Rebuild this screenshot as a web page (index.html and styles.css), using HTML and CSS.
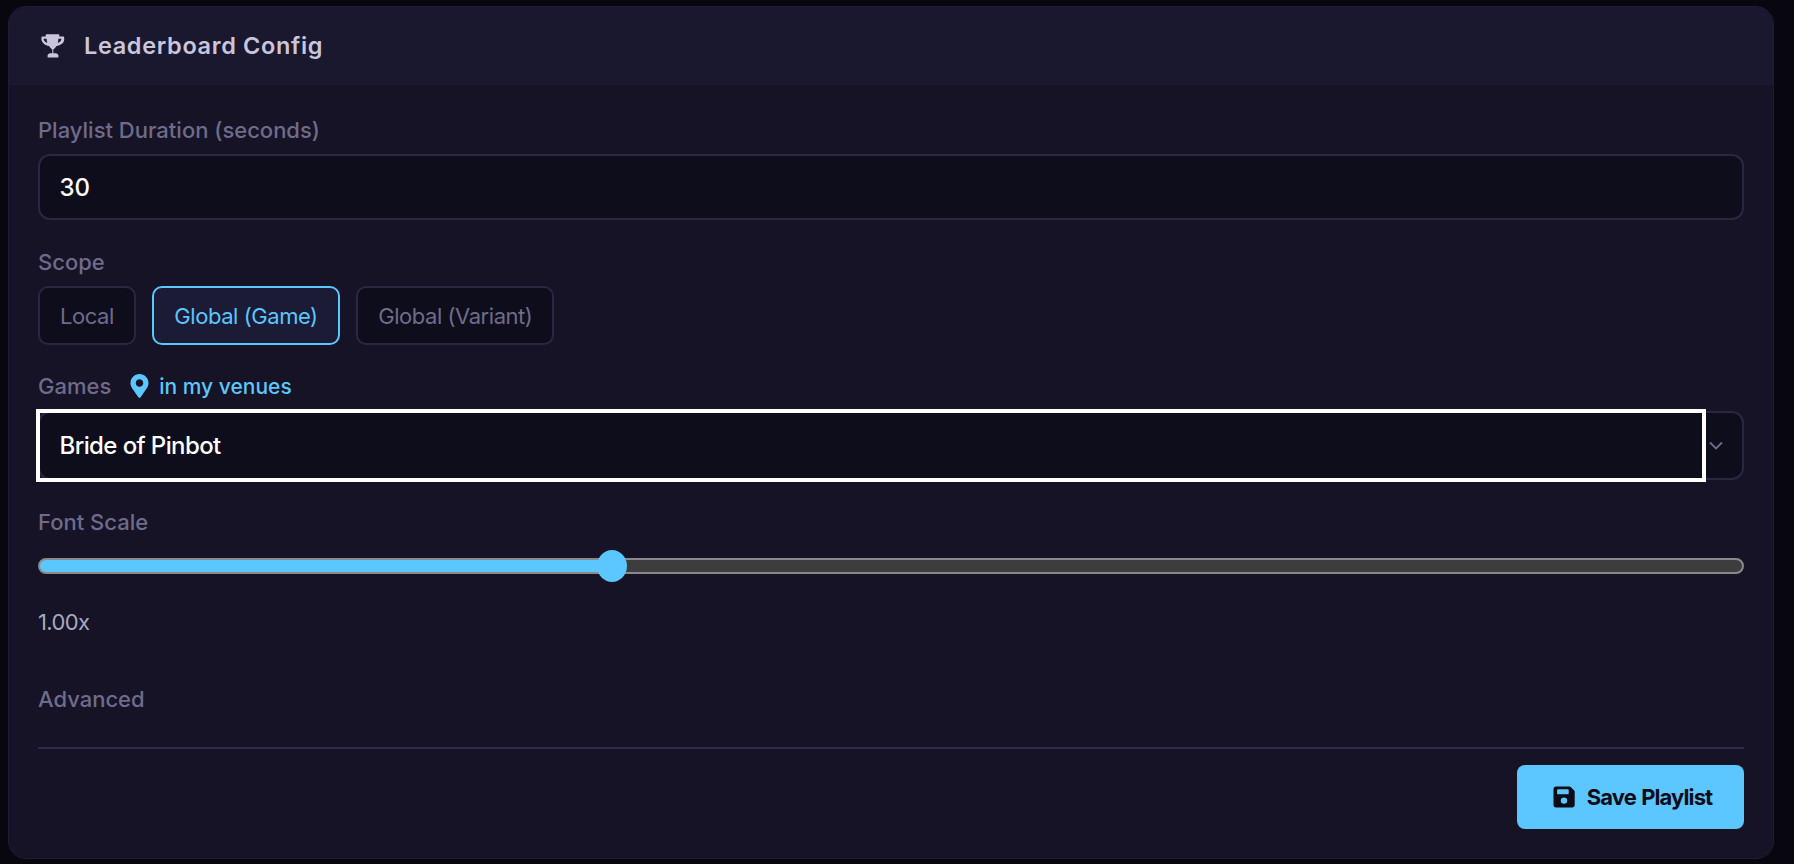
FILE: index.html
```html
<!DOCTYPE html>
<html lang="en">
<head>
<meta charset="utf-8">
<title>Leaderboard Config</title>
<link rel="stylesheet" href="styles.css">
</head>
<body>
<section class="card">
  <header class="card-head">
    <svg class="trophy" viewBox="0 0 24 24" aria-hidden="true"><path fill-rule="evenodd" d="M6.200 0.300h11.600c.6 0 1 .4 1 1v1.100h3.700c.7 0 1.200.5 1.200 1.200v1.800c0 1.700-1 3.400-2.700 4.700-1.400 1.100-3.100 1.800-4.900 2-1.300 2.100-2.500 3-3.300 3.500v3.600h2.400c1.500 0 2.700 1 2.700 2.400v1.400c0 .4-.2.6-.6.6H7.700c-.4 0-.6-.2-.6-.6v-1.400c0-1.400 1.200-2.400 2.700-2.400h2v-3.600c-.8-.5-2-1.400-3.300-3.500-1.800-.2-3.500-.9-4.900-2C1.900 8.500.9 6.800.9 5.100V3.600c0-.7.5-1.200 1.200-1.200h3.100V1.300c0-.6.4-1 1-1zM3.200 4.700v.6c0 .8.6 1.900 1.800 2.800.5.4 1.100.7 1.800 1-.4-1.300-.6-2.800-.7-4.400zm17.600 0h-2.900c-.1 1.600-.3 3.100-.7 4.400.7-.3 1.300-.6 1.800-1 1.100-.8 1.800-1.900 1.800-2.800z"/></svg>
    <h2 class="card-title">Leaderboard Config</h2>
  </header>
  <form class="card-body">
    <label class="label">Playlist Duration (seconds)</label>
    <div class="input">30</div>

    <label class="label label-scope">Scope</label>
    <div class="scope-row">
      <button type="button" class="scope">Local</button>
      <button type="button" class="scope scope-on">Global (Game)</button>
      <button type="button" class="scope">Global (Variant)</button>
    </div>

    <div class="games-row">
      <span class="label label-inline">Games</span>
      <span class="venues">
        <svg class="pin" viewBox="0 0 384 512" aria-hidden="true"><path d="M172.268 501.67C26.97 291.031 0 269.413 0 192 0 85.961 85.961 0 192 0s192 85.961 192 192c0 77.413-26.97 99.031-172.268 309.67-9.535 13.774-29.93 13.773-39.464 0zM192 272c44.183 0 80-35.817 80-80s-35.817-80-80-80-80 35.817-80 80 35.817 80 80 80z"/></svg>
        in my venues
      </span>
    </div>
    <div class="select">
      <div class="select-value">Bride of Pinbot</div>
      <svg class="chevron" viewBox="0 0 14 9" aria-hidden="true"><path d="M1 1.500 7 7.500l6-6"/></svg>
    </div>

    <label class="label label-font">Font Scale</label>
    <input class="range" type="range" min="0.5" max="2" step="0.01" value="1">
    <div class="scale-value">1.00x</div>

    <div class="label label-adv">Advanced</div>
    <div class="divider"></div>
    <div class="actions">
      <button type="button" class="save">
        <svg class="floppy" viewBox="0 0 22 22" aria-hidden="true"><path fill-rule="evenodd" d="M3 .5h13.200c.7 0 1.300.3 1.800.7l3 3c.5.5.7 1.100.7 1.800V19c0 1.400-1.100 2.500-2.500 2.500H3C1.600 21.500.5 20.400.5 19V3C.5 1.600 1.600.5 3 .5zM5 3.300c-.5 0-.9.4-.9.900v3.200c0 .5.4.9.900.9h9.800c.5 0 .9-.4.9-.9V4.200c0-.5-.4-.9-.9-.9zM11 11.400a3.200 3.200 0 1 0 0 6.400 3.200 3.200 0 0 0 0-6.400z"/></svg>
        Save Playlist
      </button>
    </div>
  </form>
</section>
</body>
</html>
```
FILE: styles.css
```css
* { box-sizing: border-box; }
html, body { margin: 0; height: 100%; }
body {
  background: #08070f;
  padding: 6px 20px 5px 8px;
  font-family: Inter, "Liberation Sans", sans-serif;
  overflow: hidden;
}
.card {
  height: 853px;
  border: 1px solid #1f1d35;
  border-radius: 18px;
  background: #151325;
  overflow: hidden;
  display: flex;
  flex-direction: column;
}
.card-head {
  height: 78px;
  flex: none;
  display: flex;
  align-items: center;
  gap: 19px;
  padding: 0 31px;
  background: #1a182e;
  border-bottom: 1px solid #1c1a30;
}
.trophy { width: 25px; height: 24px; fill: #c9c5dc; flex: none; }
.card-title {
  margin: 0;
  font-size: 23.5px;
  line-height: 30px;
  font-weight: 600;
  color: #c9c5dc;
  letter-spacing: 0.65px;
}
.card-body {
  flex: 1;
  padding: 32px 29px 0;
  display: flex;
  flex-direction: column;
}
.label {
  display: block;
  font-size: 22px;
  font-weight: 500;
  line-height: 26px;
  color: #6f6b8b;
}
.input {
  margin-top: 11px;
  height: 66px;
  border: 2px solid #2a2840;
  border-radius: 12px;
  background: #0e0d1c;
  color: #fff;
  font-size: 24px;
  font-weight: 500;
  display: flex;
  align-items: center;
  padding: 0 19.5px;
}
.label-scope { margin-top: 29px; }
.scope-row { display: flex; gap: 16.5px; margin-top: 11px; }
.scope {
  height: 59px;
  padding: 0 20px;
  border: 2px solid #2a2840;
  border-radius: 10px;
  background: #0e0d1c;
  color: #6f6b8b;
  font-family: inherit;
  font-size: 22px;
  letter-spacing: -0.45px;
}
.scope-on {
  border-color: #5cc6ff;
  background: #1b1b35;
  color: #5cc6ff;
}
.games-row { display: flex; align-items: center; gap: 19px; margin-top: 28px; height: 26px; }
.venues { display: flex; align-items: center; gap: 10px; font-size: 21px; font-weight: 500; color: #5cc6ff; }
.pin { width: 19px; height: 24px; fill: #5cc6ff; }
.select {
  position: relative;
  margin-top: 12px;
  height: 69px;
  border: 2px solid #2a2840;
  border-radius: 12px;
  background: #0e0d1c;
  display: flex;
  align-items: center;
}
.select-value {
  width: 1662px;
  height: 65px;
  display: flex;
  align-items: center;
  padding-left: 19.5px;
  outline: 4px solid #fff;
  color: #fff;
  font-size: 24px;
  font-weight: 500;
  letter-spacing: -0.6px;
}
.chevron { width: 14px; height: 9px; margin-left: 7px; fill: none; stroke: #6f6b8b; stroke-width: 1.800; }
.label-font { margin-top: 29px; }
.range {
  -webkit-appearance: none;
  appearance: none;
  display: block;
  width: 100%;
  height: 32px;
  margin: 15px 0 0;
  background: transparent;
}
.range::-webkit-slider-runnable-track {
  height: 16px;
  border: 2px solid #8a8a8a;
  border-radius: 8px;
  background: linear-gradient(to right, #5cc6ff 33.600%, #3d3d3d 33.600%);
}
.range::-webkit-slider-thumb {
  -webkit-appearance: none;
  width: 30px;
  height: 32px;
  margin-top: -10px;
  border-radius: 50%;
  background: #5cc6ff;
}
.scale-value {
  margin-top: 27px;
  height: 26px;
  font-size: 22px;
  line-height: 26px;
  color: #a8a8c0;
  letter-spacing: -0.6px;
}
.label-adv { margin-top: 51px; }
.divider { margin-top: 35px; height: 2px; background: #2e2a4a; }
.actions { display: flex; justify-content: flex-end; margin-top: 16px; }
.save {
  width: 227px;
  height: 64px;
  padding: 0 0 0 4px;
  border: 0;
  border-radius: 8px;
  background: #5cc6ff;
  color: #0d0d1a;
  font-family: inherit;
  font-size: 22px;
  font-weight: 700;
  letter-spacing: -0.9px;
  word-spacing: 1px;
  display: flex;
  align-items: center;
  justify-content: center;
  gap: 12px;
}
.floppy { width: 22px; height: 22px; fill: #0d0d1a; }
```
